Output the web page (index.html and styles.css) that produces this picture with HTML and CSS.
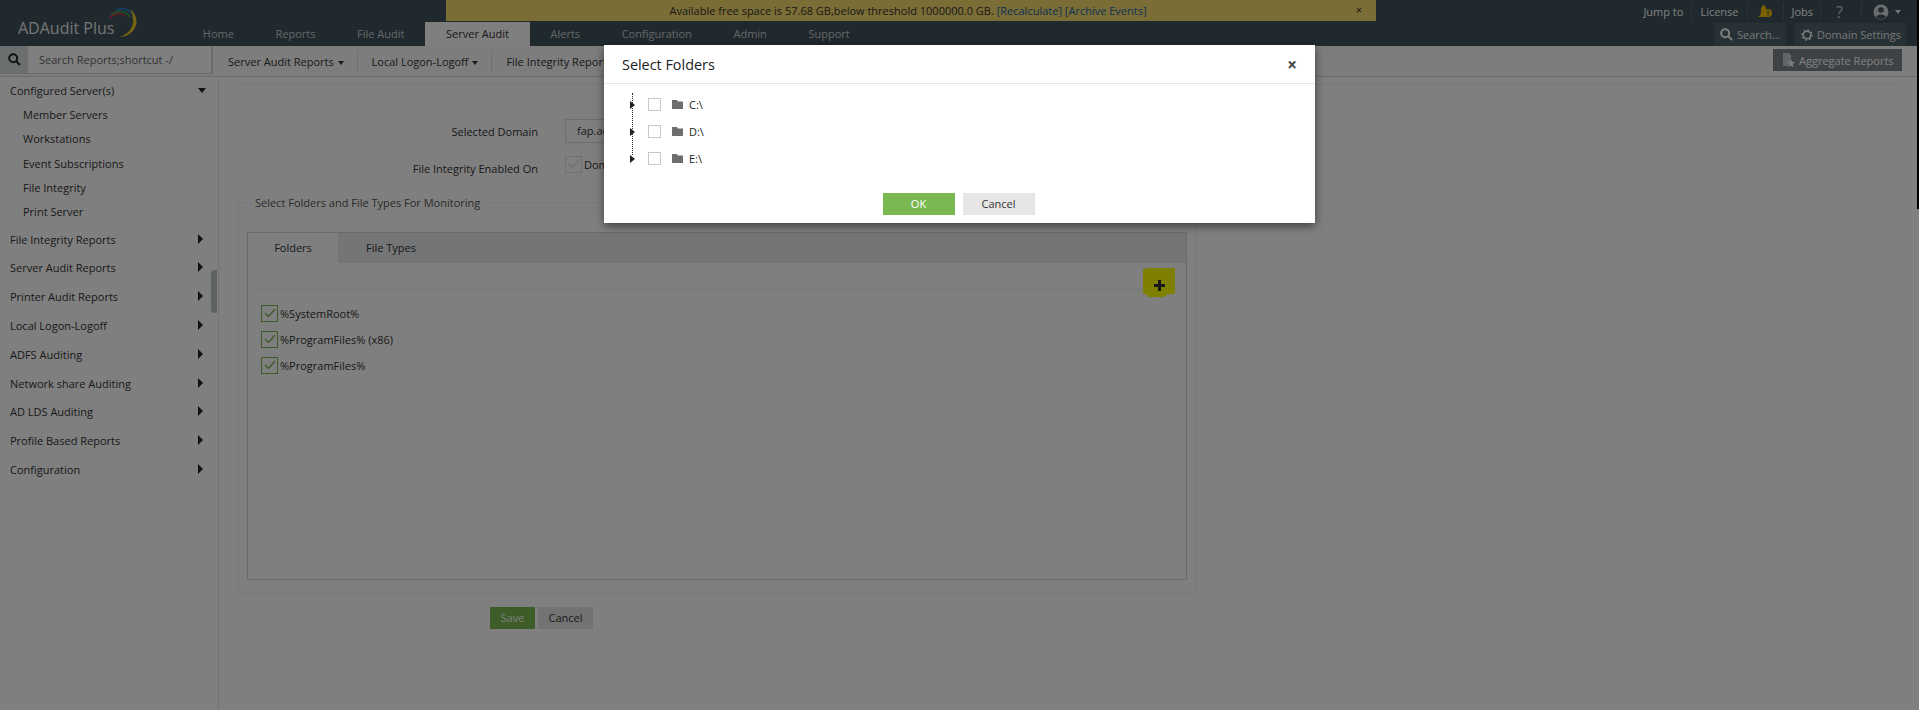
FILE: index.html
```html
<!DOCTYPE html>
<html lang="en">
<head>
    <meta charset="UTF-8">
    <title>ADAudit Plus</title>
    <link rel="stylesheet" href="styles.css">
</head>
<body>
    <!-- Dark header with logo, tabs and tools -->
    <div class="top-bar">
        <div class="logo">
            <span class="logo-text">ADAudit Plus</span>
            <svg class="logo-arcs" width="32" height="32" viewBox="0 0 32 32" fill="none">
                <path d="M2 11 C6 6 12 5 17 9" stroke="#d8324a" stroke-width="1.6"/>
                <path d="M3 8 C9 3 17 3 22 10" stroke="#3aa655" stroke-width="1.6"/>
                <path d="M8 3 C15 0 24 3 26 11" stroke="#2a7fc1" stroke-width="1.800"/>
                <path d="M22 2 C30 8 32 21 20 28 C17 29.500 14 30 12 29.500 C20 28 26 20 25 12 C24.500 8 24 5 22 2Z" fill="#f2c524"/>
            </svg>
        </div>
        <ul class="main-tabs">
            <li>Home</li>
            <li>Reports</li>
            <li>File Audit</li>
            <li class="active">Server Audit</li>
            <li>Alerts</li>
            <li>Configuration</li>
            <li>Admin</li>
            <li>Support</li>
        </ul>
        <div class="tools">
            <div class="tools-row">
                <span class="tool">Jump to</span>
                <span class="tool">License</span>
                <span class="tool tool-bell">
                    <svg width="14" height="16" viewBox="0 0 14 16"><path d="M6 1 C3 2 3 5 3 7 C3 10 2 12 0 13 L9 13 L11 12 C8 12 7 10 8 7 C8 5 8 2 6 1Z" fill="#f5c400"/><circle cx="10" cy="9" r="4" fill="#f5c400"/><rect x="9.500" y="6.500" width="1.200" height="3.200" fill="#40525a"/><rect x="9.500" y="10.300" width="1.200" height="1.200" fill="#40525a"/></svg>
                </span>
                <span class="tool tool-jobs">Jobs</span>
                <span class="tool tool-help">?</span>
                <span class="tool tool-last">
                    <svg width="16" height="16" viewBox="0 0 16 16"><circle cx="8" cy="8" r="7.500" fill="#d5dadc"/><circle cx="8" cy="6" r="2.800" fill="#40525a"/><path d="M3 13 C4 9.500 12 9.500 13 13 C11 15.500 5 15.500 3 13Z" fill="#40525a"/></svg>
                    <i class="caret caret-light"></i>
                </span>
            </div>
            <div class="tools-row buttons-row">
                <span class="dark-btn search-btn">
                    <svg width="13" height="13" viewBox="0 0 13 13" fill="none" stroke="#fff" stroke-width="2"><circle cx="5.200" cy="5.200" r="4"/><path d="M8 8 L12 12"/></svg>
                    Search...
                </span>
                <span class="dark-btn settings-btn">
                    <svg width="12" height="12" viewBox="0 0 12 12" fill="none" stroke="#fff"><circle cx="6" cy="6" r="3.800" stroke-width="1.500"/><circle cx="6" cy="6" r="5" stroke-width="1.500" stroke-dasharray="1.500 2.400"/></svg>
                    Domain Settings
                </span>
            </div>
        </div>
    </div>

    <!-- Search box and report menu -->
    <div class="sub-bar">
        <div class="search-box">
            <span class="search-icon">
                <svg width="13" height="13" viewBox="0 0 13 13" fill="none" stroke="#222" stroke-width="2"><circle cx="5.200" cy="5.200" r="4"/><path d="M8 8 L12 12"/></svg>
            </span>
            <span class="search-input">Search Reports;shortcut -/</span>
        </div>
        <ul class="report-menu">
            <li>Server Audit Reports <i class="caret"></i></li>
            <li>Local Logon-Logoff <i class="caret"></i></li>
            <li>File Integrity Reports <i class="caret"></i></li>
        </ul>
        <span class="aggregate-btn">
            <svg width="12" height="14" viewBox="0 0 12 14"><path d="M0 0 H6 L8 2 V6 L5 13 H0Z" fill="#c5cbce"/><path d="M8 6 L9.300 8.700 L12 9 L10 11 L10.500 14 L8 12.500 L5.500 14 L6 11 L4 9 L6.700 8.700Z" fill="#f2f4f5"/></svg>
            Aggregate Reports
        </span>
    </div>

    <div class="page">
        <!-- Left menu -->
        <div class="side-menu">
            <div class="menu-head open">Configured Server(s) <i class="caret caret-big"></i></div>
            <div class="menu-sub">Member Servers</div>
            <div class="menu-sub">Workstations</div>
            <div class="menu-sub">Event Subscriptions</div>
            <div class="menu-sub">File Integrity</div>
            <div class="menu-sub menu-sub-last">Print Server</div>
            <div class="menu-head">File Integrity Reports <i class="arrow"></i></div>
            <div class="menu-head">Server Audit Reports <i class="arrow"></i></div>
            <div class="menu-head">Printer Audit Reports <i class="arrow"></i></div>
            <div class="menu-head">Local Logon-Logoff <i class="arrow"></i></div>
            <div class="menu-head">ADFS Auditing <i class="arrow"></i></div>
            <div class="menu-head">Network share Auditing <i class="arrow"></i></div>
            <div class="menu-head">AD LDS Auditing <i class="arrow"></i></div>
            <div class="menu-head">Profile Based Reports <i class="arrow"></i></div>
            <div class="menu-head">Configuration <i class="arrow"></i></div>
            <div class="menu-handle"></div>
        </div>

        <!-- Main content -->
        <div class="content">
            <div class="content-rule"></div>
            <div class="form-row domain-row">
                <label>Selected Domain</label>
                <span class="domain-input">fap.adaudit.com</span>
            </div>
            <div class="form-row enabled-row">
                <label>File Integrity Enabled On</label>
                <span class="check check-off"><svg width="12" height="10" viewBox="0 0 12 10" fill="none" stroke="#e2e2e2" stroke-width="1.500"><path d="M1 5 L4.500 8.500 L11 1"/></svg></span>
                <span class="enabled-text">Domain Controllers</span>
            </div>
            <fieldset class="monitor-box">
                <legend>Select Folders and File Types For Monitoring</legend>
                <div class="panel">
                    <div class="panel-tabs">
                        <span class="panel-tab active">Folders</span>
                        <span class="panel-tab">File Types</span>
                    </div>
                    <div class="panel-tools">
                        <span class="add-btn">
                            <svg width="11" height="11" viewBox="0 0 11 11"><path d="M4 0 H7 V4 H11 V7 H7 V11 H4 V7 H0 V4 H4Z" fill="#333"/></svg>
                        </span>
                    </div>
                    <div class="folder-row">
                        <span class="check"><svg width="12" height="10" viewBox="0 0 12 10" fill="none" stroke="#7ab851" stroke-width="1.500"><path d="M1 5 L4.500 8.500 L11 1"/></svg></span>
                        %SystemRoot%
                    </div>
                    <div class="folder-row">
                        <span class="check"><svg width="12" height="10" viewBox="0 0 12 10" fill="none" stroke="#7ab851" stroke-width="1.500"><path d="M1 5 L4.500 8.500 L11 1"/></svg></span>
                        %ProgramFiles% (x86)
                    </div>
                    <div class="folder-row">
                        <span class="check"><svg width="12" height="10" viewBox="0 0 12 10" fill="none" stroke="#7ab851" stroke-width="1.500"><path d="M1 5 L4.500 8.500 L11 1"/></svg></span>
                        %ProgramFiles%
                    </div>
                </div>
            </fieldset>
            <div class="form-buttons">
                <span class="btn btn-save">Save</span>
                <span class="btn btn-cancel">Cancel</span>
            </div>
        </div>
    </div>

    <!-- Notification strip sits over the header -->
    <div class="notice">
        <span>Available free space is 57.68 GB,below threshold 1000000.0 GB. <a>[Recalculate]</a> <a>[Archive Events]</a></span>
        <span class="notice-close">&times;</span>
    </div>

    <div class="right-strip"></div>
    <div class="overlay"></div>

    <!-- Select Folders dialog -->
    <div class="dialog">
        <div class="dialog-head">
            <span>Select Folders</span>
            <span class="dialog-close">&times;</span>
        </div>
        <div class="tree">
            <div class="tree-row">
                <i class="tree-arrow"></i><span class="tree-check"></span>
                <svg width="11" height="9" viewBox="0 0 11 9"><path d="M0 0 H5 L6 1.500 H11 V9 H0Z" fill="#6e6e6e"/></svg>
                <span>C:\</span>
            </div>
            <div class="tree-row">
                <i class="tree-arrow"></i><span class="tree-check"></span>
                <svg width="11" height="9" viewBox="0 0 11 9"><path d="M0 0 H5 L6 1.500 H11 V9 H0Z" fill="#6e6e6e"/></svg>
                <span>D:\</span>
            </div>
            <div class="tree-row">
                <i class="tree-arrow"></i><span class="tree-check"></span>
                <svg width="11" height="9" viewBox="0 0 11 9"><path d="M0 0 H5 L6 1.500 H11 V9 H0Z" fill="#6e6e6e"/></svg>
                <span>E:\</span>
            </div>
        </div>
        <div class="dialog-buttons">
            <span class="dialog-btn dialog-ok">OK</span>
            <span class="dialog-btn dialog-cancel">Cancel</span>
        </div>
    </div>
</body>
</html>
```

FILE: styles.css
```css
html, body {
    height: 100%;
}

body {
    font-family: "Open Sans", Arial, sans-serif;
    font-size: 11px;
    color: #333;
    background-color: #fff;
    margin: 0;
    overflow: hidden;
}

ul {
    list-style-type: none;
    margin: 0;
    padding: 0;
}

/* Header */
.top-bar {
    display: flex;
    height: 46px;
    background-color: #40525a;
    color: #fff;
}

.logo {
    position: relative;
    width: 182px;
    flex: none;
    padding: 17px 0 0 18px;
    box-sizing: border-box;
}

.logo-text {
    font-size: 16px;
    line-height: 22px;
    color: #e8e8e8;
    white-space: nowrap;
}

.logo-arcs {
    position: absolute;
    left: 108px;
    top: 7px;
}

.main-tabs {
    display: flex;
    align-items: flex-end;
}

.main-tabs li {
    height: 24px;
    line-height: 24px;
    padding: 0 20.800px;
    color: #c9ced1;
}

.main-tabs li.active {
    background-color: #fff;
    color: #333;
}

.tools {
    margin-left: auto;
    flex: none;
    white-space: nowrap;
}

.tools-row {
    display: flex;
    justify-content: flex-end;
    align-items: center;
}

.tools-row:first-child {
    height: 23px;
}

.tool {
    display: flex;
    align-items: center;
    height: 17px;
    padding: 0 8px;
    border-right: 1px solid #58696f;
}

.tool-bell {
    padding: 0 11px 0 10px;
}

.tool-jobs {
    padding-right: 7px;
}

.tool-help {
    font-size: 16px;
    padding: 0 18px 0 15px;
    color: #c9ced1;
}

.tool-last {
    border: none;
    gap: 6px;
    padding: 0 18px 0 11px;
}

.buttons-row {
    gap: 8px;
    padding-right: 13px;
}

.dark-btn {
    display: flex;
    align-items: center;
    gap: 4px;
    height: 23px;
    background-color: #51636b;
    color: #e8eaeb;
    box-sizing: border-box;
}

.search-btn {
    width: 72px;
    padding-left: 6px;
}

.settings-btn {
    width: 112px;
    padding-left: 7px;
}

.caret {
    display: inline-block;
    border-top: 4px solid #333;
    border-left: 3.5px solid transparent;
    border-right: 3.5px solid transparent;
    margin-left: 1px;
    vertical-align: 1px;
}

.caret-light {
    border-top-color: #e8eaeb;
    margin-left: 0;
}

/* Search and report menu */
.sub-bar {
    display: flex;
    align-items: center;
    height: 31px;
    border-bottom: 1px solid #d8d8d8;
    box-sizing: border-box;
    background-color: #fbfbfb;
}

.search-box {
    display: flex;
    width: 213px;
    height: 28px;
    margin-bottom: 2px;
    flex: none;
    border-right: 2px solid #d5d9da;
    border-bottom: 1px solid #d5d9da;
    box-sizing: border-box;
}

.search-icon {
    display: flex;
    justify-content: center;
    align-items: center;
    width: 28px;
    background-color: #d8dee0;
}

.search-input {
    flex: 1;
    background-color: #fff;
    line-height: 27px;
    padding-left: 11px;
    color: #666;
}

.report-menu {
    display: flex;
    padding-left: 1px;
}

.report-menu li {
    padding: 0 13px 0 14px;
    height: 21px;
    line-height: 21px;
    border-right: 1px solid #e2e2e2;
    white-space: nowrap;
}

.report-menu li:last-child {
    border: none;
}

.aggregate-btn {
    display: flex;
    align-items: center;
    gap: 4px;
    margin-left: auto;
    margin-right: 17px;
    margin-bottom: 2px;
    width: 129px;
    height: 22px;
    padding-left: 10px;
    box-sizing: border-box;
    background-color: #7c858a;
    color: #fff;
    white-space: nowrap;
}

/* Body */
.page {
    display: flex;
    height: 633px;
}

.side-menu {
    position: relative;
    width: 219px;
    flex: none;
    box-sizing: border-box;
    border-right: 1px solid #e6e6e6;
    background-color: #fff;
}

.menu-head {
    position: relative;
    height: 28.800px;
    line-height: 27px;
    padding-left: 10px;
}

.menu-head.open {
    height: 26px;
}

.menu-sub {
    height: 24.300px;
    line-height: 24px;
    padding-left: 23px;
}

.menu-sub-last {
    height: 25.500px;
}

.arrow {
    position: absolute;
    left: 198px;
    top: 8px;
    border-left: 5px solid #222;
    border-top: 5px solid transparent;
    border-bottom: 5px solid transparent;
}

.caret-big {
    position: absolute;
    left: 198px;
    top: 11px;
    margin: 0;
    border-top-width: 5px;
    border-left-width: 4px;
    border-right-width: 4px;
    border-top-color: #222;
}

.menu-handle {
    position: absolute;
    left: 211px;
    top: 193px;
    width: 6px;
    height: 43px;
    background-color: #bcc4c7;
    border-radius: 4px 0 0 4px;
}

.content {
    flex: 1;
    padding: 7px 17px 0 18px;
    min-width: 0;
}

.content-rule {
    border-top: 1px solid #f0f0f0;
}

.form-row {
    display: flex;
    align-items: center;
    height: 24px;
}

.form-row label {
    width: 301px;
    margin-right: 27px;
    text-align: right;
}

.domain-row {
    margin-top: 34px;
}

.domain-input {
    width: 200px;
    height: 24px;
    line-height: 22px;
    padding-left: 11px;
    box-sizing: border-box;
    border: 1px solid #ddd;
}

.enabled-row {
    margin-top: 13px;
}

.check {
    display: inline-flex;
    justify-content: center;
    align-items: center;
    width: 17px;
    height: 17px;
    box-sizing: border-box;
    border: 1px solid #7ab851;
    margin-right: 2px;
}

.check-off {
    border-color: #e2e2e2;
}

.enabled-row .check,
.enabled-text {
    margin-bottom: 8px;
}

.monitor-box {
    width: 958px;
    height: 399px;
    box-sizing: border-box;
    margin: 15px 0 0 1px;
    padding: 22px 8px 0 8px;
    border: 1px solid #f0f0f0;
}

.monitor-box legend {
    padding: 0 8px;
    color: #555;
}

.panel {
    height: 348px;
    box-sizing: border-box;
    border: 1px solid #d5d5d5;
}

.panel-tabs {
    display: flex;
    height: 30px;
    background-color: #e7eaec;
}

.panel-tab {
    width: 90px;
    text-align: center;
    line-height: 30px;
}

.panel-tab.active {
    background-color: #fff;
}

.panel-tab:last-child {
    width: 106px;
}

.panel-tools {
    display: flex;
    justify-content: flex-end;
    height: 26px;
    margin: 0 9px 10px 9px;
    border-bottom: 1px solid #eee;
}

.add-btn {
    display: flex;
    justify-content: center;
    align-items: center;
    width: 32px;
    height: 29px;
    margin: 5px 2px 0 0;
    padding-top: 5px;
    box-sizing: border-box;
    background-color: #ffff00;
    clip-path: polygon(0 4%, 19% 0, 100% 0, 100% 88%, 75% 92%, 65% 100%, 13% 100%, 13% 92%, 0 88%);
}

.folder-row {
    display: flex;
    align-items: center;
    height: 26px;
    padding-left: 13px;
}

.form-buttons {
    display: flex;
    gap: 3px;
    margin: 13px 0 0 253px;
}

.btn {
    height: 22px;
    line-height: 22px;
    text-align: center;
}

.btn-save {
    width: 45px;
    background-color: #7ab851;
    color: #fff;
}

.btn-cancel {
    width: 55px;
    background-color: #e6e6e6;
}

/* Notification strip */
.notice {
    position: absolute;
    left: 446px;
    top: 0;
    display: flex;
    justify-content: center;
    width: 930px;
    height: 21px;
    padding-right: 6px;
    box-sizing: border-box;
    line-height: 21px;
    background-color: #f5da6c;
    color: #333;
}

.notice a {
    color: #1565a8;
}

.notice-close {
    position: absolute;
    right: 14px;
    top: -1px;
}

.right-strip {
    position: absolute;
    right: 0;
    top: 0;
    width: 2px;
    height: 209px;
    background-color: #000;
}

/* Page dim and dialog */
.overlay {
    position: absolute;
    left: 0;
    top: 0;
    width: 100%;
    height: 100%;
    background-color: rgba(0, 0, 0, 0.5);
}

.dialog {
    position: absolute;
    left: 604px;
    top: 45px;
    width: 711px;
    height: 178px;
    background-color: #fff;
    box-shadow: 0 3px 9px rgba(0, 0, 0, 0.5);
}

.dialog-head {
    display: flex;
    justify-content: space-between;
    align-items: center;
    height: 38px;
    padding: 0 18px;
    border-bottom: 1px solid #e5e5e5;
    font-size: 14.400px;
    color: #222;
}

.dialog-close {
    font-size: 17px;
    font-weight: bold;
    color: #444;
}

.tree {
    position: relative;
    padding: 7px 0 0 28px;
    height: 87px;
    box-sizing: border-box;
}

.tree::before {
    content: "";
    position: absolute;
    left: 28px;
    top: 9px;
    height: 62px;
    border-left: 1px dotted #222;
}

.tree-row {
    display: flex;
    align-items: center;
    height: 27px;
    color: #222;
}

.tree-arrow {
    position: relative;
    left: -2px;
    border-left: 5px solid #222;
    border-top: 4.500px solid transparent;
    border-bottom: 4.500px solid transparent;
}

.tree-check {
    width: 11px;
    height: 11px;
    border: 1px solid #c8c8c8;
    margin: 0 11px;
}

.tree-row svg {
    margin-right: 6px;
}

.dialog-buttons {
    display: flex;
    justify-content: center;
    gap: 8px;
    padding: 22px 2px 0 0;
}

.dialog-btn {
    width: 72px;
    height: 22px;
    line-height: 22px;
    text-align: center;
}

.dialog-ok {
    background-color: #7ab851;
    color: #fff;
}

.dialog-cancel {
    background-color: #e6e6e6;
    color: #333;
}
```
